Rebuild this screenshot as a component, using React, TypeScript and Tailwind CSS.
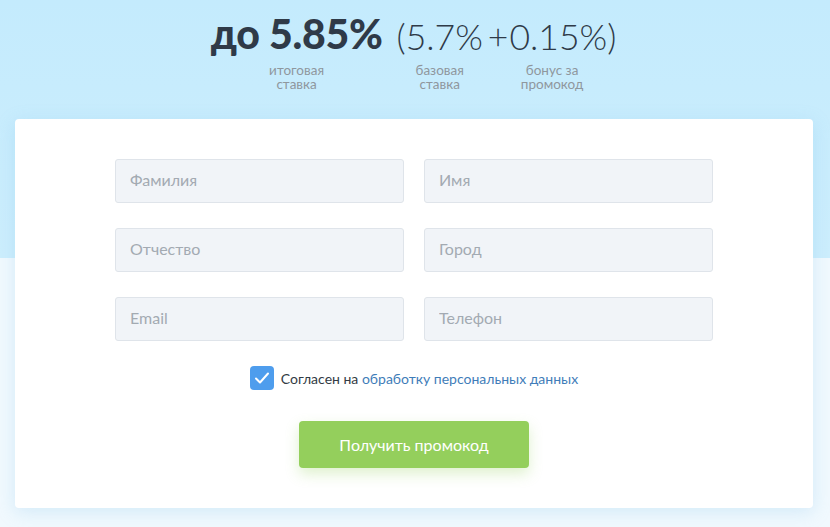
import { useState } from 'react';

const fields = [
  ['Фамилия', 'Имя'],
  ['Отчество', 'Город'],
  ['Email', 'Телефон'],
];

function Rate({ value, label, className }: { value: React.ReactNode; label: string; className?: string }) {
  return (
    <div className={`flex flex-col items-center ${className ?? ''}`}>
      <div className="h-[44px] flex items-end leading-none text-[#2f3a48] whitespace-nowrap">{value}</div>
      <div className="mt-[7px] text-center whitespace-pre-line text-[13.5px] leading-[14px] text-[#8f979e]">{label}</div>
    </div>
  );
}

export default function App() {
  const [agree, setAgree] = useState(true);

  return (
    <div
      className="relative w-[830px] h-[527px] overflow-hidden bg-[#f1f9fe]"
      style={{ fontFamily: 'Lato, "Noto Sans", sans-serif' }}
    >
      <div className="absolute inset-x-0 top-0 h-[258px] bg-gradient-to-b from-[#c4ebfd] to-[#cdeefd]" />

      <div className="relative flex flex-col items-center pt-[12px]">
        <div className="flex items-start mr-[3px]">
          <Rate
            value={<span className="text-[41px] font-black tracking-[-0.3px] pb-[2px]">до 5.85%</span>}
            label={'итоговая\nставка'}
          />
          <Rate
            value={<span className="text-[35.5px] font-light pb-[2px]">(5.7%</span>}
            label={'базовая\nставка'}
            className="ml-[14px]"
          />
          <Rate
            value={<span className="text-[35.5px] font-light pb-[2px]"><span className="mr-[1px]">+</span>0.15%)</span>}
            label={'бонус за\nпромокод'}
            className="ml-[5px]"
          />
        </div>

        <div className="mt-[28px] mr-[2px] w-[798px] h-[389px] rounded-[4px] bg-white shadow-[0_4px_18px_rgba(120,190,230,0.25)] flex flex-col items-center pt-[40px]">
          <div className="grid grid-cols-2 gap-x-[20px] gap-y-[25px]">
            {fields.flat().map((f) => (
              <input
                key={f}
                placeholder={f}
                className="w-[289px] h-[44px] rounded-[3px] border border-[#dfe4ea] bg-[#f1f4f8] px-[14px] pb-[3px] text-[16px] text-[#333] placeholder:text-[#a3aab2] outline-none"
              />
            ))}
          </div>

          <label className="mt-[25px] flex items-center gap-[7px] cursor-pointer select-none">
            <span
              onClick={() => setAgree(!agree)}
              className={`flex h-[24px] w-[24px] items-center justify-center rounded-[4px] ${agree ? 'bg-[#4e9ded]' : 'border border-[#ccd3da] bg-white'}`}
            >
              {agree && (
                <svg width="18" height="18" viewBox="0 0 18 18" fill="none">
                  <path d="M3 9.5l4 4 8-9" stroke="white" strokeWidth="2" strokeLinecap="round" strokeLinejoin="round" />
                </svg>
              )}
            </span>
            <span className="text-[14px] text-[#333b44]">
              Согласен на <a className="text-[#3f7db9]">обработку персональных данных</a>
            </span>
          </label>

          <button className="mt-[31px] w-[230px] h-[47px] rounded-[4px] bg-[#94cf5c] text-[16px] text-white shadow-[0_6px_14px_rgba(148,207,92,0.3)]">
            Получить промокод
          </button>
        </div>
      </div>
    </div>
  );
}
